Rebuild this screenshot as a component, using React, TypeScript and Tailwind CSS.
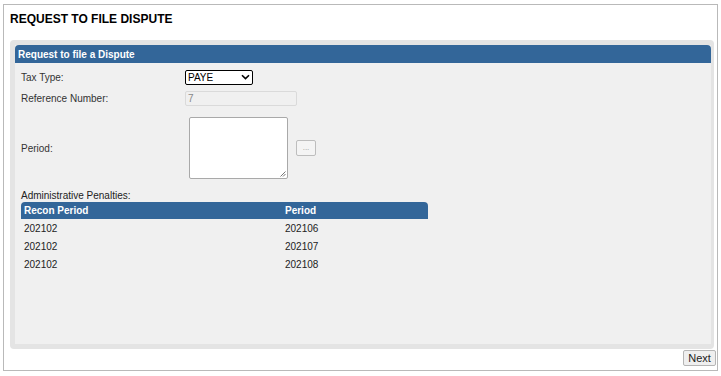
import React from 'react';

const rows = [
  { recon: '202102', period: '202106' },
  { recon: '202102', period: '202107' },
  { recon: '202102', period: '202108' },
];

export default function App() {
  return (
    <div className="w-[721px] h-[376px] bg-white pt-[4px] px-[3px] font-['Liberation_Sans',Arial,sans-serif] text-[#222]">
      <div className="h-[367px] border border-[#b9b9b9] flex flex-col">
        {/* Page title */}
        <div className="h-[35px] flex items-center pl-[6px] pb-[8px]">
          <h1 className="text-[12px] font-bold text-black">REQUEST TO FILE DISPUTE</h1>
        </div>

        {/* Panel */}
        <div className="ml-[6px] mr-[3px] h-[309px] bg-[#f0f0f0] border-[5px] border-r-[3px] border-[#e4e4e4] rounded-[4px] flex flex-col">
          <div className="h-[18px] bg-[#336699] rounded-t-[4px] flex items-center pl-[3px]">
            <span className="text-[10px] font-bold text-white">Request to file a Dispute</span>
          </div>

          <div className="pl-[6px] pt-[3px] text-[10px] text-[#333]">
            <div className="h-[22px] flex items-center">
              <span className="w-[164px]">Tax Type:</span>
              <div className="w-[68px] h-[15px] border border-black rounded-[2px] bg-white flex items-center justify-between px-[2px]">
                <span className="text-[10px] text-black">PAYE</span>
                <svg width="9" height="6" viewBox="0 0 9 6" fill="none">
                  <path d="M1 1.2L4.5 4.6L8 1.2" stroke="black" strokeWidth="1.6" />
                </svg>
              </div>
            </div>

            <div className="h-[21px] flex items-center">
              <span className="w-[164px]">Reference Number:</span>
              <div className="w-[112px] h-[15px] border border-[#dadada] rounded-[2px] bg-[#f0f0f0] flex items-center px-[2px]">
                <span className="text-[10px] text-[#888]">7</span>
              </div>
            </div>

            <div className="h-[72px] flex items-center mt-[3px]">
              <span className="w-[168px]">Period:</span>
              <div className="relative w-[99px] h-[62px] border border-[#a9a9a9] rounded-[2px] bg-white">
                <svg className="absolute right-[1px] bottom-[1px]" width="6" height="6" viewBox="0 0 6 6">
                  <path d="M5.5 0.5L0.5 5.5M5.5 3L3 5.5" stroke="#777" strokeWidth="1" />
                </svg>
              </div>
              <div className="ml-[8px] w-[20px] h-[16px] border border-[#bdbdbd] rounded-[2px] bg-[#f4f4f4] flex items-center justify-center">
                <span className="text-[8px] text-[#999] leading-none">...</span>
              </div>
            </div>

            <div className="h-[14px] flex items-center mt-[4px] text-[#222]">Administrative Penalties:</div>

            <div className="w-[407px]">
              <div className="h-[17px] bg-[#336699] rounded-t-[4px] flex items-center text-white font-bold">
                <span className="w-[264px] pl-[3px]">Recon Period</span>
                <span>Period</span>
              </div>
              {rows.map((r, i) => (
                <div key={i} className="h-[18px] flex items-center text-[#222]">
                  <span className="w-[264px] pl-[3px]">{r.recon}</span>
                  <span>{r.period}</span>
                </div>
              ))}
            </div>
          </div>
        </div>

        {/* Footer */}
        <div className="flex justify-end pr-[1px] pt-[1px]">
          <button className="w-[33px] h-[16px] border border-[#b5b5b5] rounded-[2px] bg-[#efefef] text-[11px] text-[#222] flex items-center justify-center">
            Next
          </button>
        </div>
      </div>
    </div>
  );
}
